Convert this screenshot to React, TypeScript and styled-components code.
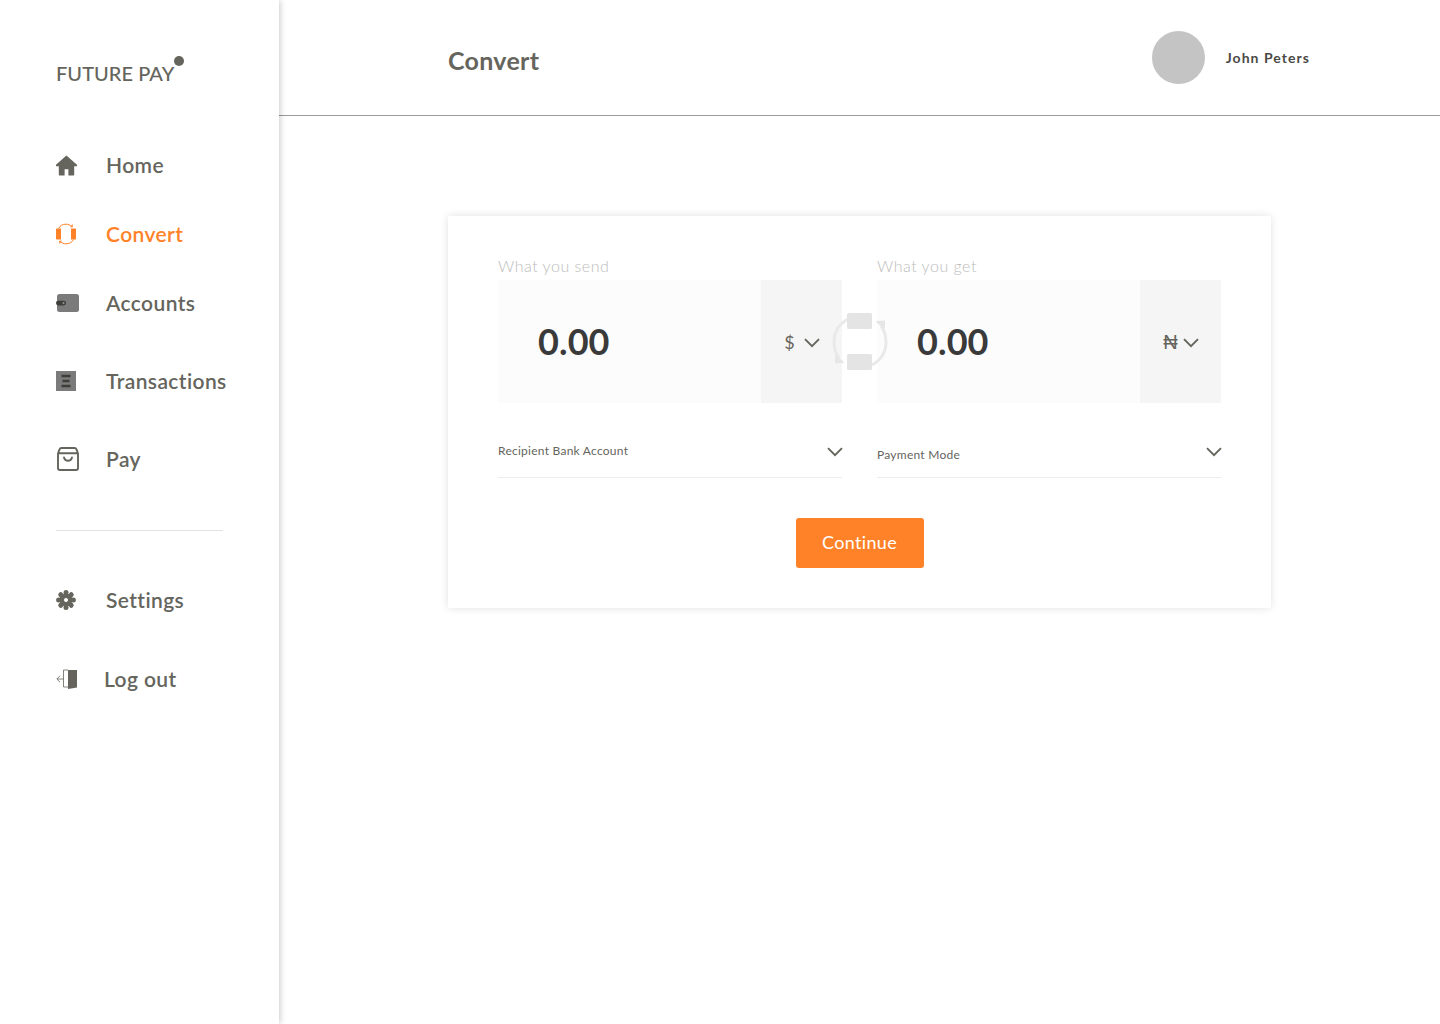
import React from 'react';
import styled, { createGlobalStyle } from 'styled-components';

const GlobalStyle = createGlobalStyle`
    * { box-sizing: border-box; }
    html, body { margin: 0; padding: 0; background: #fff; }
    body { font-family: 'Lato', 'Open Sans', sans-serif; }
`;

const Page = styled.div`
    display: flex;
    width: 1440px;
    height: 1024px;
    overflow: hidden;
    background: #fff;
`;

const Sidebar = styled.aside`
    width: 279px;
    flex: none;
    padding: 61px 0 0 56px;
    box-shadow: 1px 0 6px rgba(0, 0, 0, 0.22);
    position: relative;
    z-index: 1;
`;

const Logo = styled.div`
    position: relative;
    display: inline-block;
    height: 24px;
    font-size: 20px;
    line-height: 24px;
    font-weight: 500;
    color: #65655d;
    letter-spacing: 0.05px;
    white-space: nowrap;
    margin-bottom: 68px;

    &::after {
        content: '';
        position: absolute;
        left: 118px;
        top: -5px;
        width: 10px;
        height: 10px;
        border-radius: 50%;
        background: #65655d;
    }
`;

const NavList = styled.nav`
    display: flex;
    flex-direction: column;
`;

const NavItem = styled.a<{ $active?: boolean; $gap: number; $textGap?: number }>`
    display: flex;
    align-items: center;
    height: 24px;
    margin-bottom: ${(p) => p.$gap}px;
    font-size: 21px;
    font-weight: 600;
    letter-spacing: 0.4px;
    color: ${(p) => (p.$active ? '#ff8228' : '#65655d')};

    svg {
        flex: none;
        margin-right: ${(p) => p.$textGap ?? 26}px;
    }
`;

const NavLabel = styled.span`
    margin-top: -2px;
`;

const Divider = styled.hr`
    width: 167px;
    height: 1px;
    margin: 0 0 57px;
    border: 0;
    background: #e2e2e2;
`;

const Main = styled.main`
    flex: 1;
    display: flex;
    flex-direction: column;
`;

const Header = styled.header`
    height: 116px;
    flex: none;
    display: flex;
    align-items: center;
    padding: 0 130px 0 169px;
    border-bottom: 1px solid #9a9a9a;
`;

const Title = styled.h1`
    flex: 1;
    margin: 5px 0 0;
    font-size: 25px;
    line-height: 30px;
    font-weight: 700;
    color: #65655d;
    letter-spacing: 0.3px;
`;

const Avatar = styled.div`
    width: 53px;
    height: 53px;
    border-radius: 50%;
    background: #c4c4c4;
    margin: 0 21px 0 0;
`;

const UserName = styled.span`
    font-size: 14px;
    font-weight: 700;
    color: #4a4a45;
    letter-spacing: 1.05px;
`;

const Content = styled.div`
    padding: 100px 0 0 169px;
`;

const Card = styled.section`
    position: relative;
    width: 823px;
    height: 392px;
    padding: 40px 50px 0;
    background: #fff;
    box-shadow: 0 0 8px rgba(0, 0, 0, 0.12);
    border-radius: 2px;
`;

const Columns = styled.div`
    display: grid;
    grid-template-columns: 344px 344px;
    column-gap: 35px;
`;

const FieldLabel = styled.label`
    display: block;
    height: 24px;
    font-size: 16px;
    line-height: 20px;
    font-weight: 300;
    color: #bcbcbc;
    letter-spacing: 0.5px;
`;

const AmountBox = styled.div`
    display: flex;
    height: 123px;
    background: #fcfcfc;
`;

const Amount = styled.div`
    flex: 1;
    padding: 0 0 2px 40px;
    align-self: center;
    font-size: 36px;
    line-height: 44px;
    font-weight: 700;
    color: #3a3a3a;
    letter-spacing: 0.1px;
`;

const Currency = styled.div`
    width: 81px;
    display: flex;
    align-items: center;
    justify-content: center;
    gap: 9px;
    padding-left: 1px;
    background: #f5f5f5;
    color: #65655d;
    font-size: 18px;

    svg {
        margin-top: 2px;
    }
`;

const Naira = styled.span`
    margin-right: -4px;
    font-family: 'Liberation Sans', sans-serif;
    font-size: 20px;
    line-height: 20px;
`;

const SelectRow = styled.div<{ $labelDrop?: number }>`
    display: flex;
    align-items: flex-start;
    justify-content: space-between;
    height: 75px;
    padding-top: 42px;
    border-bottom: 1px solid #ececec;
    font-size: 12px;
    line-height: 14px;
    color: #65655d;
    letter-spacing: 0.25px;

    span {
        margin-top: ${(p) => p.$labelDrop ?? -1}px;
    }

    svg {
        margin: 2px -1px 0 0;
    }
`;

const ButtonRow = styled.div`
    display: flex;
    justify-content: center;
    margin-top: 40px;
`;

const ContinueButton = styled.button`
    width: 128px;
    height: 50px;
    padding: 0 0 2px;
    border: 0;
    border-radius: 3px;
    background: #ff8228;
    color: #fff;
    font-family: inherit;
    font-size: 18px;
    letter-spacing: 0.35px;
`;

const SwapIcon = styled.svg`
    position: absolute;
    left: 383px;
    top: 97px;
`;

const Chevron = () => (
    <svg width="16" height="10" viewBox="0 0 16 10" fill="none">
        <path d="M1 1.200l7 7 7-7" stroke="#65655d" strokeWidth="1.900" />
    </svg>
);

const HomeIcon = () => (
    <svg width="24" height="24" viewBox="0 0 24 24">
        <path fill="#65655d" d="M10.400 2.500L0 11.800v1.400h2.800v8.300c0 .6.400 1 1 1h4.800v-6.200h3.800v6.200h4.800c.6 0 1-.4 1-1v-8.300H21v-1.400z" />
    </svg>
);

const ConvertIcon = () => (
    <svg width="24" height="24" viewBox="0 0 24 24" fill="none">
        <path stroke="#ff8228" strokeWidth="1" d="M2.500 6.500C4 3.500 6.700 2.200 10 2.200c2.100 0 4 .7 5.400 2M17.500 17.500c-1.500 3-4.200 4.300-7.500 4.300-2.100 0-4-.7-5.400-2" />
        <path fill="#ff8228" d="M0 7.500c0-.6.400-1 1-1h4v11H1c-.6 0-1-.4-1-1zM15 6.500h4c.6 0 1 .4 1 1v9c0 .6-.4 1-1 1h-4zM14 5.500l3-.4-.6-3zM6 18.500l-3 .4.600 3z" />
    </svg>
);

const WalletIcon = () => (
    <svg width="24" height="24" viewBox="0 0 24 24">
        <rect x="1" y="3" width="22" height="18" rx="2.500" fill="#7b7b7b" />
        <rect x="0" y="9.800" width="10" height="4.600" rx="2.300" fill="#3d3d3a" />
        <circle cx="7.500" cy="12.100" r="1.100" fill="#8f8f8f" />
    </svg>
);

const ReceiptIcon = () => (
    <svg width="24" height="24" viewBox="0 0 24 24">
        <rect x="0" y="2" width="20" height="20" fill="#7b7b7b" />
        <path fill="#3d3d3a" d="M5.500 5.700h9v2.600h-9zM6.500 10.700h7v2.600h-7zM5.500 15.700h9v2.600h-9z" />
    </svg>
);

const BagIcon = () => (
    <svg width="24" height="24" viewBox="0 0 24 24" fill="none" stroke="#65655d" strokeWidth="1.900">
        <path d="M5.500 1h13c1 0 1.700.6 2.100 1.600L22 6.500V21c0 1.100-.9 2-2 2H4c-1.100 0-2-.9-2-2V6.500l1.400-3.900C3.800 1.600 4.500 1 5.500 1zM2 6.200h20" strokeLinejoin="round" />
        <path d="M8 10.500c.6 2.300 2 3.300 4 3.300s3.400-1 4-3.300" strokeLinecap="round" />
    </svg>
);

const gearTeeth = [0, 45, 90, 135, 180, 225, 270, 315];

const GearIcon = () => (
    <svg width="24" height="24" viewBox="0 0 24 24">
        <circle cx="10" cy="12" r="6.500" fill="#65655d" />
        {gearTeeth.map((angle) => (
            <circle key={angle} cx="10" cy="4.600" r="2.500" fill="#65655d" transform={`rotate(${angle} 10 12)`} />
        ))}
        <circle cx="10" cy="12" r="2" fill="#fff" />
    </svg>
);

const LogoutIcon = () => (
    <svg width="22" height="24" viewBox="0 0 22 24" fill="none">
        <path fill="#65655d" d="M12 3h9v17.500L12 22z" />
        <path stroke="#65655d" strokeWidth="0.800" d="M12 3H7.500v17H12M7.500 12H1M4 8.800L.8 12 4 15.200" />
    </svg>
);

export default function App() {
    return (
        <Page>
            <GlobalStyle />
            <Sidebar>
                <Logo>FUTURE PAY</Logo>
                <NavList>
                    <NavItem $gap={45}><HomeIcon /><NavLabel>Home</NavLabel></NavItem>
                    <NavItem $gap={45} $active><ConvertIcon /><NavLabel>Convert</NavLabel></NavItem>
                    <NavItem $gap={54}><WalletIcon /><NavLabel>Accounts</NavLabel></NavItem>
                    <NavItem $gap={54}><ReceiptIcon /><NavLabel>Transactions</NavLabel></NavItem>
                    <NavItem $gap={59}><BagIcon /><NavLabel>Pay</NavLabel></NavItem>
                    <Divider />
                    <NavItem $gap={55}><GearIcon /><NavLabel>Settings</NavLabel></NavItem>
                    <NavItem $gap={0} $textGap={26}><LogoutIcon /><NavLabel>Log out</NavLabel></NavItem>
                </NavList>
            </Sidebar>
            <Main>
                <Header>
                    <Title>Convert</Title>
                    <Avatar />
                    <UserName>John Peters</UserName>
                </Header>
                <Content>
                    <Card>
                        <Columns>
                            <div>
                                <FieldLabel>What you send</FieldLabel>
                                <AmountBox>
                                    <Amount>0.00</Amount>
                                    <Currency>$ <Chevron /></Currency>
                                </AmountBox>
                                <SelectRow>
                                    <span>Recipient Bank Account</span>
                                    <Chevron />
                                </SelectRow>
                            </div>
                            <div>
                                <FieldLabel>What you get</FieldLabel>
                                <AmountBox>
                                    <Amount>0.00</Amount>
                                    <Currency><Naira>₦</Naira> <Chevron /></Currency>
                                </AmountBox>
                                <SelectRow $labelDrop={3}>
                                    <span>Payment Mode</span>
                                    <Chevron />
                                </SelectRow>
                            </div>
                        </Columns>
                        <ButtonRow>
                            <ContinueButton>Continue</ContinueButton>
                        </ButtonRow>
                        <SwapIcon width="58" height="58" viewBox="0 0 58 58" fill="none">
                            <path stroke="#e9e9e9" strokeWidth="3" d="M17 6C8 11 3 19 3 29c0 6 2 12 5 16" />
                            <path stroke="#e9e9e9" strokeWidth="3" d="M41 52c9-5 14-13 14-23 0-6-2-12-5-16" />
                            <path fill="#e6e6e6" d="M4 42l8 6 1 2-9 .5zM54 16l-8-6-1-2 9-.5z" />
                            <rect x="16" y="0" width="25" height="16" rx="1.500" fill="#e4e4e4" />
                            <rect x="16" y="41" width="25" height="16" rx="1.500" fill="#e4e4e4" />
                        </SwapIcon>
                    </Card>
                </Content>
            </Main>
        </Page>
    );
}
